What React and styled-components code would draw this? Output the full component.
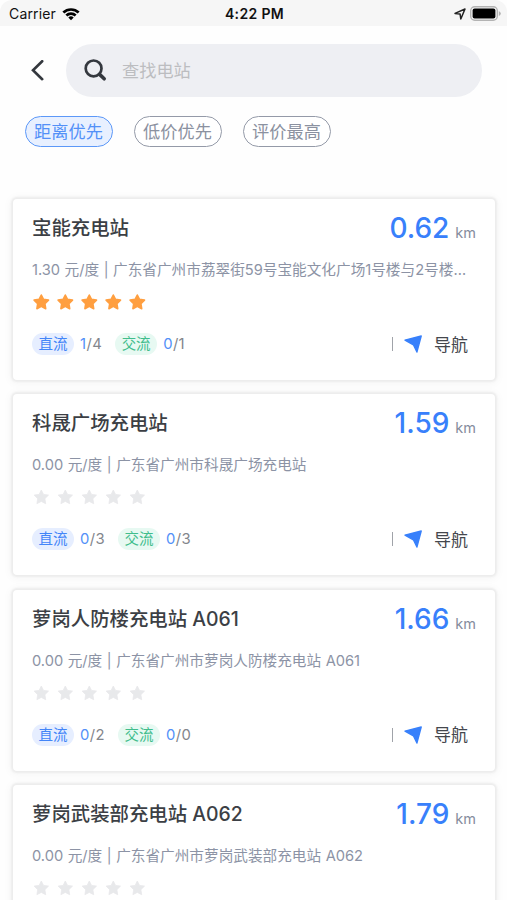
import { useState } from "react";
import styled, { createGlobalStyle } from "styled-components";

const filters = ["距离优先", "低价优先", "评价最高"];

const stations = [
  {
    name: "宝能充电站",
    price: "1.30",
    address: "广东省广州市荔翠街59号宝能文化广场1号楼与2号楼之间",
    distance: "0.62",
    score: 5,
    dc: [1, 4],
    ac: [0, 1],
  },
  {
    name: "科晟广场充电站",
    price: "0.00",
    address: "广东省广州市科晟广场充电站",
    distance: "1.59",
    score: 0,
    dc: [0, 3],
    ac: [0, 3],
  },
  {
    name: "萝岗人防楼充电站 A061",
    price: "0.00",
    address: "广东省广州市萝岗人防楼充电站 A061",
    distance: "1.66",
    score: 0,
    dc: [0, 2],
    ac: [0, 0],
  },
  {
    name: "萝岗武装部充电站 A062",
    price: "0.00",
    address: "广东省广州市萝岗武装部充电站 A062",
    distance: "1.79",
    score: 0,
    dc: [0, 2],
    ac: [0, 2],
  },
];

const Wifi = () => (
  <svg width="18" height="14" viewBox="0 0 18 14">
    <path d="M0.4 4.6A12.4 12.4 0 0 1 17.6 4.6L15.7 6.5A9.6 9.6 0 0 0 2.3 6.5Z" />
    <path d="M3.4 7.6A8 8 0 0 1 14.6 7.6L12.7 9.5A5.3 5.3 0 0 0 5.3 9.5Z" />
    <path d="M6.3 10.5A3.9 3.9 0 0 1 11.7 10.5L9 13.3Z" />
  </svg>
);

const Battery = () => (
  <svg width="31" height="15" viewBox="0 0 31 15">
    <rect x="0.7" y="0.7" width="26.6" height="13.6" rx="4" fill="#f6f6f6" stroke="#b3b3b3" strokeWidth="1.4" />
    <rect x="2.6" y="2.5" width="22.8" height="10" rx="2" fill="#000" />
    <path d="M28.8 5q2 1 2 2.5t-2 2.5z" fill="#b3b3b3" />
  </svg>
);

const Star = ({ on }) => (
  <svg width="18" height="18" viewBox="0 0 18 18">
    <path
      d="M9.3 2L11.5 6.4L16.5 7.1L12.9 10.7L13.7 15.7L9.3 13.4L4.9 15.7L5.7 10.7L2.1 7.1L7.1 6.4Z"
      fill={on ? "#ff9f40" : "#e8e9eb"}
      stroke={on ? "#ff9f40" : "#e8e9eb"}
      strokeWidth={on ? 1.6 : 0.8}
      strokeLinejoin="round"
    />
  </svg>
);

const Station = ({ item }) => (
  <Card>
    <CardHead>
      <Name>{item.name}</Name>
      <Distance>
        {item.distance}
        <Unit>km</Unit>
      </Distance>
    </CardHead>
    <Address>
      {item.price} 元/度 | {item.address}
    </Address>
    <Stars>
      {[1, 2, 3, 4, 5].map((n) => (
        <Star key={n} on={n <= item.score} />
      ))}
    </Stars>
    <CardFoot>
      <Tag>直流</Tag>
      <Count>
        <b>{item.dc[0]}</b>/{item.dc[1]}
      </Count>
      <Tag $green>交流</Tag>
      <Count>
        <b>{item.ac[0]}</b>/{item.ac[1]}
      </Count>
      <Navigate>
        <Divider />
        <svg width="19" height="18" viewBox="0 0 19 18">
          <path
            d="M1 5.1L17.2 1L12.9 17L9.4 9.8Z"
            fill="#3880fb"
            stroke="#3880fb"
            strokeWidth="1.4"
            strokeLinejoin="round"
          />
        </svg>
        <NavText>导航</NavText>
      </Navigate>
    </CardFoot>
  </Card>
);

const App = () => {
  const [active, setActive] = useState(0);

  return (
    <Screen>
      <GlobalStyle />
      <StatusBar>
        <Carrier>
          Carrier <Wifi />
        </Carrier>
        <Time>4:22 PM</Time>
        <StatusIcons>
          <svg width="12" height="12" viewBox="0 0 12 12">
            <path
              d="M1 5.4L11 1L6.8 11L6.1 6.1Z"
              fill="none"
              stroke="#222"
              strokeWidth="1.5"
              strokeLinejoin="round"
            />
          </svg>
          <Battery />
        </StatusIcons>
      </StatusBar>
      <Header>
        <Back>
          <svg width="13" height="22" viewBox="0 0 13 22">
            <path d="M11.2 1.2L2 10.2L11.2 19.2" fill="none" stroke="#34383e" strokeWidth="2.6" strokeLinecap="round" />
          </svg>
        </Back>
        <SearchBox>
          <svg width="23" height="23" viewBox="0 0 23 23">
            <circle cx="9.6" cy="9.4" r="7.9" fill="none" stroke="#34383e" strokeWidth="2.7" />
            <path d="M15.6 15.4L20.2 19.8" stroke="#34383e" strokeWidth="3.6" strokeLinecap="round" />
          </svg>
          <SearchInput placeholder="查找电站" />
        </SearchBox>
      </Header>
      <Filters>
        {filters.map((text, i) => (
          <Filter key={text} $active={i === active} onClick={() => setActive(i)}>
            {text}
          </Filter>
        ))}
      </Filters>
      <List>
        {stations.map((item) => (
          <Station key={item.name} item={item} />
        ))}
      </List>
    </Screen>
  );
};

const GlobalStyle = createGlobalStyle`
  * {
    box-sizing: border-box;
  }
  body {
    margin: 0;
    background: #fff;
    font-family: Inter, "Noto Sans CJK SC", sans-serif;
  }
  svg {
    display: block;
    flex-shrink: 0;
  }
`;

const Screen = styled.div`
  width: 507px;
  height: 900px;
  overflow: hidden;
  background: #fefefe;
`;

const StatusBar = styled.div`
  display: grid;
  grid-template-columns: 1fr auto 1fr;
  align-items: center;
  height: 26px;
  padding: 1px 6px 0 8px;
  border-radius: 12px 12px 0 0;
  background: #f6f6f6;
  color: #111;
`;

const Carrier = styled.div`
  display: flex;
  align-items: center;
  gap: 6px;
  padding-left: 1px;
  font-size: 14px;
  letter-spacing: 0.15px;
`;

const Time = styled.div`
  font-size: 14px;
  font-weight: 600;
  letter-spacing: 0.35px;
`;

const StatusIcons = styled.div`
  display: flex;
  justify-content: flex-end;
  align-items: center;
  gap: 4px;
`;

const Header = styled.div`
  display: flex;
  align-items: center;
  padding: 18px 25px 0 31px;
`;

const Back = styled.div`
  width: 35px;
`;

const SearchBox = styled.div`
  display: flex;
  flex: 1;
  align-items: center;
  height: 53px;
  padding: 0 18px;
  border-radius: 27px;
  background: #eeeff3;
`;

const SearchInput = styled.input`
  flex: 1;
  margin-left: 15px;
  padding: 0;
  border: 0;
  outline: none;
  background: transparent;
  font-family: inherit;
  font-size: 17.2px;
  &::placeholder {
    color: #bcbdc0;
  }
`;

const Filters = styled.div`
  display: flex;
  gap: 21px;
  padding: 19px 25px 0;
`;

const Filter = styled.button`
  width: 88px;
  height: 31px;
  padding: 0 1px 0 0;
  border: 1.5px solid ${(props) => (props.$active ? "#5c98f8" : "#949aa8")};
  border-radius: 16px;
  background: ${(props) => (props.$active ? "#e8f0ff" : "#fff")};
  color: ${(props) => (props.$active ? "#5390f8" : "#8b91a0")};
  font-family: inherit;
  font-size: 17.2px;
  line-height: 27px;
`;

const List = styled.div`
  display: flex;
  flex-direction: column;
  gap: 14.3px;
  padding: 52px 12px 0 13px;
`;

const Card = styled.div`
  flex-shrink: 0;
  height: 181px;
  padding: 14px 19px 0;
  border-radius: 4px;
  background: #fff;
  box-shadow: 0 0 2px 2px #ececec, 0 1px 8px 3px #f7f7f7;
`;

const CardHead = styled.div`
  display: flex;
  justify-content: space-between;
  align-items: flex-start;
  height: 30px;
`;

const Name = styled.div`
  color: #3c3f45;
  font-size: 19.4px;
  font-weight: 500;
  line-height: 31px;
`;

const Distance = styled.div`
  color: #3880fb;
  font-size: 28px;
  font-weight: 450;
  line-height: 31px;
`;

const Unit = styled.span`
  margin-left: 6px;
  color: #858c9c;
  font-size: 14.5px;
  font-weight: 400;
`;

const Address = styled.div`
  height: 22px;
  margin: 16px 0 0;
  padding-right: 2px;
  overflow: hidden;
  color: #8c93a5;
  font-size: 14.65px;
  line-height: 22px;
  text-overflow: ellipsis;
  white-space: nowrap;
  word-spacing: 0.4px;
`;

const Stars = styled.div`
  display: flex;
  align-items: center;
  gap: 6px;
  height: 20px;
  margin-top: 11px;
`;

const CardFoot = styled.div`
  display: flex;
  align-items: center;
  height: 24px;
  margin-top: 20px;
`;

const Tag = styled.span`
  width: 42px;
  height: 22px;
  border-radius: 11px;
  background: ${(props) => (props.$green ? "#e7f9f2" : "#e6eeff")};
  color: ${(props) => (props.$green ? "#41bd8c" : "#4385f8")};
  font-size: 14.5px;
  line-height: 22px;
  text-align: center;
`;

const Count = styled.span`
  margin: 0 13px 0 6px;
  color: #83868c;
  font-size: 14.8px;
  letter-spacing: 0.4px;
  b {
    color: #5390f8;
    font-weight: 400;
  }
`;

const Navigate = styled.div`
  display: flex;
  align-items: center;
  margin-left: auto;
  padding-right: 8px;
  svg {
    margin: 0 11px;
  }
`;

const NavText = styled.span`
  padding-top: 1px;
  color: #44474d;
  font-size: 17px;
  line-height: 24px;
`;

const Divider = styled.span`
  width: 1.5px;
  height: 14px;
  background: #a0a3a9;
`;

export default App;
